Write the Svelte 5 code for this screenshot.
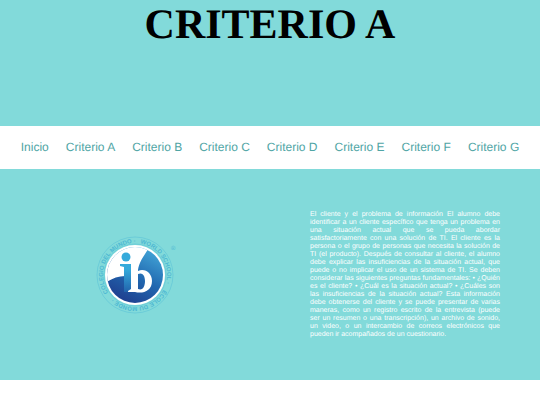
<script lang="ts">
    const links = [
        "Inicio",
        "Criterio A",
        "Criterio B",
        "Criterio C",
        "Criterio D",
        "Criterio E",
        "Criterio F",
        "Criterio G",
    ];
</script>

<header>
    <h1>CRITERIO A</h1>
</header>

<nav>
    {#each links as link}
        <a href="#{link.toLowerCase().replace(' ', '-')}">{link}</a>
    {/each}
</nav>

<main>
    <div class="logoWrapper">
        <svg class="logo" viewBox="-5 -5 90 90" role="img" aria-label="IB World School">
            <defs>
                <linearGradient id="globe" x1="0.8" y1="0.1" x2="0.35" y2="1">
                    <stop offset="0" stop-color="#3f9fd3" />
                    <stop offset="0.5" stop-color="#2168b0" />
                    <stop offset="1" stop-color="#1f3f8f" />
                </linearGradient>
                <linearGradient
                    id="letter"
                    gradientUnits="userSpaceOnUse"
                    x1="0"
                    y1="18"
                    x2="0"
                    y2="58"
                >
                    <stop offset="0" stop-color="#35aadb" />
                    <stop offset="0.4" stop-color="#35aadb" />
                    <stop offset="1" stop-color="#2160aa" />
                </linearGradient>
                <clipPath id="disc"><circle cx="40" cy="40" r="28" /></clipPath>
                <path id="ring" d="M15 60 A32 32 0 0 1 65 20 A32 32 0 0 1 15 60" />
            </defs>
            <circle class="line" cx="40" cy="40" r="38" />
            <circle class="line" cx="40" cy="40" r="31" />
            <circle cx="40" cy="40" r="30" fill="#fff" />
            <circle cx="40" cy="40" r="28" fill="url(#globe)" />
            <path
                clip-path="url(#disc)"
                fill="#fff"
                d="M8 50 V5 H57 C54 17 45 22 43 35 L37 44 L30 41 C23 41 16 44 10 48 Z"
            />
            <circle cx="31" cy="22" r="4.5" fill="url(#letter)" />
            <path fill="url(#letter)" d="M25 29 H36 V57 H29 V32 L25 31 Z" />
            <path
                fill="#fff"
                fill-rule="evenodd"
                d="M36 30 L43 30 V36 C50 33 57 38 57 46 C57 56 48 59 40 57 H33 V56 L36 54 Z M43 39 V54 C48 56 50 51 50 46 C50 40 47 37 43 39 Z"
            />
            <text class="ringText"
                ><textPath href="#ring" startOffset="3">COLEGIO DEL MUNDO ·</textPath><textPath
                    href="#ring"
                    startOffset="77">WORLD SCHOOL ·</textPath
                ><textPath href="#ring" startOffset="137">ÉCOLE DU MONDE ·</textPath></text
            >
            <text class="mark" x="76" y="15">®</text>
        </svg>
    </div>
    <p>
        El cliente y el problema de información El alumno debe identificar a un
        cliente específico que tenga un problema en una situación actual que se
        pueda abordar satisfactoriamente con una solución de TI. El cliente es
        la persona o el grupo de personas que necesita la solución de TI (el
        producto). Después de consultar al cliente, el alumno debe explicar las
        insuficiencias de la situación actual, que puede o no implicar el uso de
        un sistema de TI. Se deben considerar las siguientes preguntas
        fundamentales: • ¿Quién es el cliente? • ¿Cuál es la situación actual? •
        ¿Cuáles son las insuficiencias de la situación actual? Esta información
        debe obtenerse del cliente y se puede presentar de varias maneras, como
        un registro escrito de la entrevista (puede ser un resumen o una
        transcripción), un archivo de sonido, un video, o un intercambio de
        correos electrónicos que pueden ir acompañados de un cuestionario.
    </p>
</main>

<style>
    :global(body) {
        margin: 0;
        background-color: #fff;
        font-family: "Liberation Sans", Arial, sans-serif;
        text-rendering: geometricPrecision;
    }
    header {
        background-color: #82dada;
        padding-bottom: 76px;
    }
    h1 {
        margin: 0;
        text-align: center;
        font-family: "Liberation Serif", "Times New Roman", serif;
        font-size: 42px;
        line-height: 50px;
        color: #000;
    }
    nav {
        display: flex;
        justify-content: center;
        gap: 17px;
        padding: 14px 0;
    }
    nav a {
        color: #4fa5a5;
        font-size: 12px;
        line-height: 15px;
        text-decoration: none;
        white-space: nowrap;
    }
    main {
        display: grid;
        grid-template-columns: 1fr 1fr;
        align-items: center;
        background-color: #82dada;
        padding: 42px 0 41px;
    }
    .logoWrapper {
        display: flex;
        justify-content: center;
    }
    .logo {
        width: 90px;
        height: 90px;
    }
    .line {
        fill: none;
        stroke: #5cc3d6;
        stroke-width: 0.6;
    }
    .ringText {
        fill: #4db8d3;
        font-size: 6px;
        font-weight: bold;
    }
    .mark {
        fill: #4db8d3;
        font-size: 6px;
    }
    p {
        margin: 0 40px;
        color: #fff;
        font-size: 7px;
        line-height: 8px;
        text-align: justify;
    }
</style>
